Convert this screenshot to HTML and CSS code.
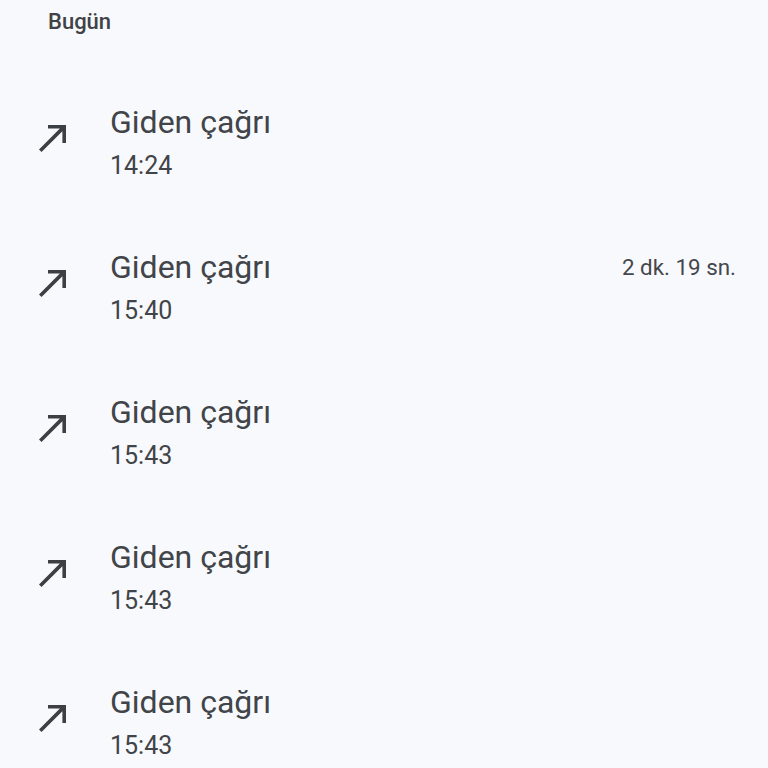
FILE: index.html
```html
<!DOCTYPE html>
<html lang="tr">
<head>
<meta charset="utf-8">
<link rel="stylesheet" href="styles.css">
</head>
<body>
<div class="header">Bugün</div>
<ul class="list">
  <li class="row">
    <div class="icon"><svg viewBox="4 5 15 15" width="27" height="27"><path d="M9 5v2h6.59L4 18.59 5.41 20 17 8.41V15h2V5z" fill="#3c3f43"/></svg></div>
    <div class="text"><div class="title">Giden çağrı</div><div class="time">14:24</div></div>
  </li>
  <li class="row">
    <div class="icon"><svg viewBox="4 5 15 15" width="27" height="27"><path d="M9 5v2h6.59L4 18.59 5.41 20 17 8.41V15h2V5z" fill="#3c3f43"/></svg></div>
    <div class="text"><div class="title">Giden çağrı</div><div class="time">15:40</div></div>
    <div class="duration">2 dk. 19 sn.</div>
  </li>
  <li class="row">
    <div class="icon"><svg viewBox="4 5 15 15" width="27" height="27"><path d="M9 5v2h6.59L4 18.59 5.41 20 17 8.41V15h2V5z" fill="#3c3f43"/></svg></div>
    <div class="text"><div class="title">Giden çağrı</div><div class="time">15:43</div></div>
  </li>
  <li class="row">
    <div class="icon"><svg viewBox="4 5 15 15" width="27" height="27"><path d="M9 5v2h6.59L4 18.59 5.41 20 17 8.41V15h2V5z" fill="#3c3f43"/></svg></div>
    <div class="text"><div class="title">Giden çağrı</div><div class="time">15:43</div></div>
  </li>
  <li class="row">
    <div class="icon"><svg viewBox="4 5 15 15" width="27" height="27"><path d="M9 5v2h6.59L4 18.59 5.41 20 17 8.41V15h2V5z" fill="#3c3f43"/></svg></div>
    <div class="text"><div class="title">Giden çağrı</div><div class="time">15:43</div></div>
  </li>
</ul>
</body>
</html>
```
FILE: styles.css
```css
html, body {
  margin: 0;
  padding: 0;
  background: #f8f9fd;
  font-family: Roboto, "Noto Sans", sans-serif;
  color: #414448;
}
.header {
  height: 72px;
  box-sizing: border-box;
  padding-left: 48px;
  padding-top: 8px;
  font-size: 22px;
  line-height: 28px;
  font-weight: 500;
  color: #3f4246;
}
.list {
  list-style: none;
  margin: 0;
  padding: 0;
}
.row {
  height: 145px;
  display: flex;
  align-items: center;
  padding: 0 32px 0 39px;
}
.icon {
  width: 71px;
  display: flex;
  align-items: center;
  margin-top: -12px;
}
.icon svg { display: block; }
.text {
  flex: 1;
  margin-top: 3px;
}
.title {
  font-size: 32px;
  line-height: 40px;
}
.time {
  font-size: 25px;
  line-height: 48px;
}
.duration {
  align-self: center;
  margin-top: -45px;
  font-size: 22.4px;
  color: #44474b;
}
```
